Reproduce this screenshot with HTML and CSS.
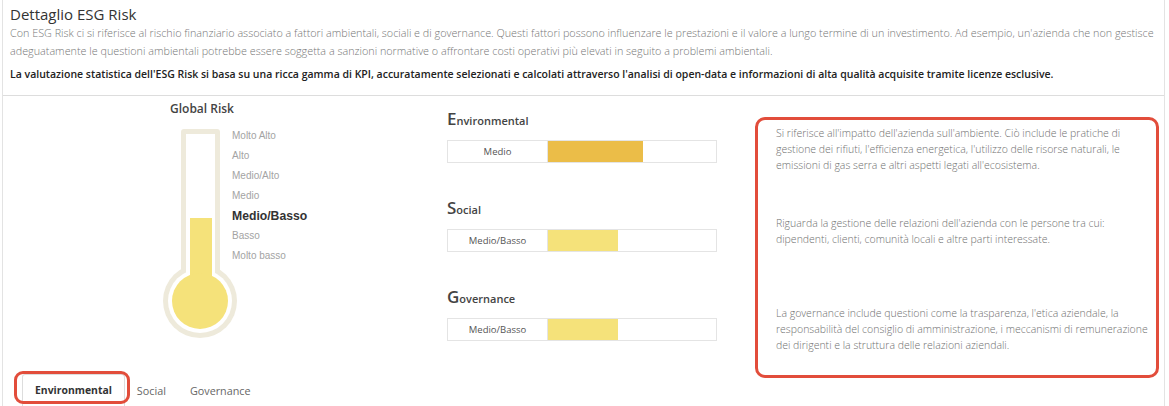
FILE: index.html
```html
<!DOCTYPE html>
<html lang="it">
<head>
<meta charset="utf-8">
<title>Dettaglio ESG Risk</title>
<link rel="stylesheet" href="styles.css">
</head>
<body>
<div class="panel">
  <div class="head">
    <h3 class="title">Dettaglio ESG Risk</h3>
    <p class="intro">Con ESG Risk ci si riferisce al rischio finanziario associato a fattori ambientali, sociali e di governance. Questi fattori possono influenzare le prestazioni e il valore a lungo termine di un investimento. Ad esempio, un'azienda che non gestisce adeguatamente le questioni ambientali potrebbe essere soggetta a sanzioni normative o affrontare costi operativi più elevati in seguito a problemi ambientali.</p>
    <p class="lead">La valutazione statistica dell'ESG Risk si basa su una ricca gamma di KPI, accuratamente selezionati e calcolati attraverso l'analisi di open-data e informazioni di alta qualità acquisite tramite licenze esclusive.</p>
  </div>
  <div class="body">
    <div class="global">
      <div class="gr-title">Global Risk</div>
      <div class="thermo">
        <svg class="thermo-svg" width="70" height="212" viewBox="0 0 70 212">
          <rect x="19" y="2" width="39" height="150" rx="3" fill="#eeeadb"/>
          <circle cx="38" cy="174" r="37" fill="#eeeadb"/>
          <rect x="24" y="7" width="29" height="150" fill="#ffffff"/>
          <circle cx="38" cy="174" r="32" fill="#ffffff"/>
          <rect x="28" y="91" width="22" height="70" fill="#f5e27a"/>
          <circle cx="38" cy="174" r="28" fill="#f5e27a"/>
        </svg>
        <ul class="levels">
          <li>Molto Alto</li>
          <li>Alto</li>
          <li>Medio/Alto</li>
          <li>Medio</li>
          <li class="current">Medio/Basso</li>
          <li>Basso</li>
          <li>Molto basso</li>
        </ul>
      </div>
    </div>
    <div class="bars">
      <div class="factor">
        <div class="f-title"><span class="cap">E</span>nvironmental</div>
        <div class="bar"><div class="bar-label">Medio</div><div class="bar-fill medio" style="width:95px"></div></div>
      </div>
      <div class="factor">
        <div class="f-title"><span class="cap">S</span>ocial</div>
        <div class="bar"><div class="bar-label">Medio/Basso</div><div class="bar-fill basso" style="width:70px"></div></div>
      </div>
      <div class="factor">
        <div class="f-title"><span class="cap">G</span>overnance</div>
        <div class="bar"><div class="bar-label">Medio/Basso</div><div class="bar-fill basso" style="width:70px"></div></div>
      </div>
    </div>
    <div class="desc">
      <p>Si riferisce all'impatto dell'azienda sull'ambiente. Ciò include le pratiche di<br>gestione dei rifiuti, l'efficienza energetica, l'utilizzo delle risorse naturali, le<br>emissioni di gas serra e altri aspetti legati all'ecosistema.</p>
      <p>Riguarda la gestione delle relazioni dell'azienda con le persone tra cui:<br>dipendenti, clienti, comunità locali e altre parti interessate.</p>
      <p>La governance include questioni come la trasparenza, l'etica aziendale, la<br><span class="tight">responsabilità del consiglio di amministrazione, i meccanismi di remunerazione</span><br>dei dirigenti e la struttura delle relazioni aziendali.</p>
    </div>
  </div>
  <ul class="tabs">
    <li class="tab active">Environmental</li>
    <li class="tab">Social</li>
    <li class="tab">Governance</li>
  </ul>
</div>
</body>
</html>
```

FILE: styles.css
```css
html, body {
  margin: 0;
  padding: 0;
  background: #ffffff;
  font-family: "Open Sans", "Liberation Sans", sans-serif;
}

.panel {
  margin-left: 2px;
  width: 1163px;
  height: 406px;
  border-left: 1px solid #e3e3e3;
  border-right: 1px solid #e3e3e3;
  box-sizing: border-box;
  overflow: hidden;
}

.head {
  height: 92px;
  padding: 3px 8px 0 7px;
  border-bottom: 1px solid #dddddd;
}

.title {
  margin: 0;
  font-size: 15px;
  line-height: 22px;
  font-weight: 400;
  color: #333333;
}

.intro {
  margin: -1px 0 0;
  font-size: 10.8px;
  line-height: 18px;
  font-weight: 300;
  color: #777777;
}

.lead {
  margin: 5px 0 0;
  font-size: 10.5px;
  line-height: 18px;
  font-weight: 600;
  color: #222222;
}

.body {
  display: flex;
  align-items: flex-start;
  height: 278px;
}

.global {
  width: 444px;
  flex: none;
}

.gr-title {
  margin: 4px 0 0 167px;
  font-size: 12px;
  line-height: 18px;
  font-weight: 600;
  color: #444444;
}

.thermo {
  display: flex;
  margin: 9px 0 0 159px;
}

.thermo-svg {
  display: block;
  overflow: visible;
  flex: none;
}

.levels {
  list-style: none;
  margin: -1px 0 0;
  padding: 0;
  font-family: "Liberation Sans", Arial, sans-serif;
  font-size: 10px;
  line-height: 20px;
  color: #a3a3a3;
}

.levels .current {
  font-size: 12.2px;
  font-weight: 700;
  color: #333333;
}

.bars {
  width: 270px;
  flex: none;
  padding-top: 11px;
}

.factor {
  height: 89px;
}

.f-title {
  font-size: 11px;
  line-height: 24px;
  font-weight: 600;
  color: #444444;
}

.f-title .cap {
  font-size: 17px;
}

.bar {
  display: flex;
  height: 23px;
  margin-top: 7px;
  border: 1px solid #e4e4e4;
  box-sizing: border-box;
  background: #ffffff;
}

.bar-label {
  width: 99px;
  flex: none;
  border-right: 1px solid #e4e4e4;
  font-size: 9.5px;
  line-height: 21px;
  text-align: center;
  color: #555555;
}

.bar-fill {
  height: 100%;
}

.bar-fill.medio {
  background: #ebbd48;
}

.bar-fill.basso {
  background: #f5e27a;
}

.desc {
  flex: none;
  width: 404px;
  height: 261px;
  margin: 21px 0 0 38px;
  padding: 5px 2px 0 18px;
  border: 3px solid #e24d3b;
  border-radius: 10px;
  box-sizing: border-box;
}

.desc p {
  margin: 0;
  height: 90px;
  font-size: 10.5px;
  line-height: 16px;
  font-weight: 300;
  color: #707070;
  white-space: nowrap;
}

.desc .tight {
  letter-spacing: 0;
}

.tabs {
  display: flex;
  list-style: none;
  margin: 0;
  padding: 0 0 0 19px;
  height: 32px;
  border-bottom: 1px solid #dddddd;
  width: 1144px;
}

.tab {
  position: relative;
  padding: 9px 12px 8px;
  line-height: 15px;
  font-size: 10.8px;
  color: #666666;
}

.tab.active {
  padding: 8px 12px;
  font-size: 10.4px;
  font-weight: 700;
  color: #333333;
  background: #ffffff;
  border: 1px solid #dddddd;
  border-bottom: none;
  border-radius: 3px 3px 0 0;
  height: 17px;
  margin-bottom: -1px;
}

.tab.active::after {
  content: "";
  position: absolute;
  left: -9px;
  right: -6px;
  top: -4px;
  bottom: 4px;
  border: 3px solid #e24d3b;
  border-radius: 9px;
}
```
